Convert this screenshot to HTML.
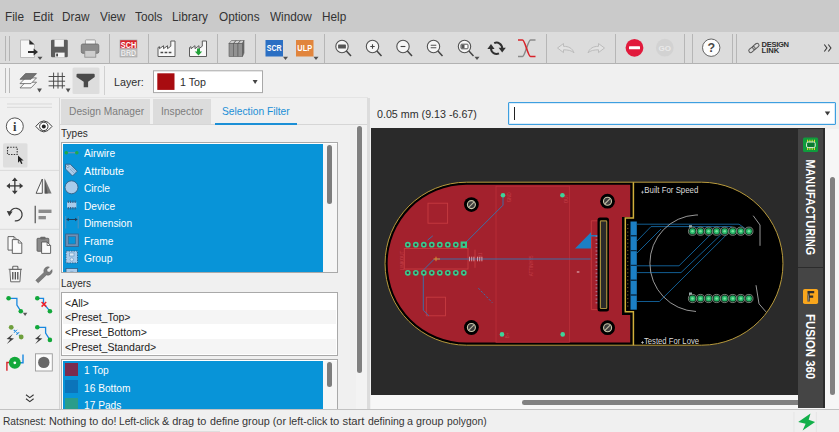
<!DOCTYPE html>
<html lang="en">
<head>
<meta charset="utf-8">
<title>EAGLE Board Editor</title>
<style>
*{box-sizing:border-box;margin:0;padding:0}
html,body{width:839px;height:432px;overflow:hidden;background:#f0f0f0}
body{position:relative;font-family:"Liberation Sans",sans-serif;color:#1a1a1a;font-size:11px}
.abs{position:absolute}
.t{position:absolute;white-space:nowrap;transform-origin:0 50%;line-height:1}
/* menu */
#menubar{left:0;top:0;width:839px;height:31.500px;background:#cacaca}
#menubar .t{font-size:13px;top:9.500px;color:#333;transform:scaleX(.905)}
/* toolbar 1 */
#tb1{left:0;top:31.500px;width:839px;height:32.500px;background:#dcdcdc;border-bottom:1px solid #b2b2b2}
.vsep{position:absolute;width:1px;background:#c3c3c3}
/* toolbar 2 */
#tb2{left:0;top:64px;width:839px;height:33px;background:#f0f0f0}
/* left palette */
#pal{left:0;top:97px;width:60px;height:312px;background:#f0f0f0;border-right:1px solid #d4d4d4}
.hsep{position:absolute;height:1px;background:#d0d0d0;left:0;width:59px}
/* panel */
#panel{left:60px;top:97px;width:311px;height:312px;background:#f0f0f0}
.tab{position:absolute;top:2px;height:24.500px;background:#dcdcdc}
.tab .t,.tabtxt{font-size:11px;color:#7c7c7c}
.list{position:absolute;background:#fff;border:1px solid #a9a9a9}
.sel{position:absolute;background:#0894d8}
.row{position:absolute;left:0;height:17.5px;width:100%}
.row .t{left:21px;top:4px;font-size:11.5px;color:#fff;transform:scaleX(.885)}
.lbl{font-size:11.5px;color:#2a2a2a;transform:scaleX(.87)}
/* canvas */
#cv{left:371px;top:128.300px;width:454px;height:266.700px;background:#2a2a2a;overflow:hidden}
/* status */
.st{top:6px;font-size:11.5px;color:#363636;white-space:pre}
#status{left:0;top:409px;width:839px;height:23px;background:#f0f0f0;border-top:1.400px solid #c2c2c2;overflow:hidden}
</style>
</head>
<body>

<!-- MENU BAR -->
<div id="menubar" class="abs">
  <span class="t" style="left:5px">File</span>
  <span class="t" style="left:32.5px">Edit</span>
  <span class="t" style="left:62px">Draw</span>
  <span class="t" style="left:100px">View</span>
  <span class="t" style="left:135px">Tools</span>
  <span class="t" style="left:172px">Library</span>
  <span class="t" style="left:219px">Options</span>
  <span class="t" style="left:269.5px">Window</span>
  <span class="t" style="left:322px">Help</span>
</div>

<!-- TOOLBAR 1 -->
<div id="tb1" class="abs">
  <svg class="abs" style="left:0;top:0" width="839" height="33" viewBox="0 31 839 33">
<path d="M5.5 35v25M9.5 35v25" stroke="#b4b4b4" stroke-width="1"/>
<path d="M109.5 33v29.5" stroke="#b6b6b6" stroke-width="1"/>
<path d="M148.5 33v29.5" stroke="#b6b6b6" stroke-width="1"/>
<path d="M217.5 33v29.5" stroke="#b6b6b6" stroke-width="1"/>
<path d="M255.5 33v29.5" stroke="#b6b6b6" stroke-width="1"/>
<path d="M324.5 33v29.5" stroke="#b6b6b6" stroke-width="1"/>
<path d="M546.5 33v29.5" stroke="#b6b6b6" stroke-width="1"/>
<path d="M615.5 33v29.5" stroke="#b6b6b6" stroke-width="1"/>
<path d="M684.5 33v29.5" stroke="#b6b6b6" stroke-width="1"/>
<path d="M692.5 33v29.5" stroke="#b6b6b6" stroke-width="1"/>
<path d="M732.5 33v29.5" stroke="#b6b6b6" stroke-width="1"/>
<path d="M736.5 33v29.5" stroke="#b6b6b6" stroke-width="1"/>
<path d="M20.500 39h9l5 4.600v12.900h-14z" fill="#f7f7f7" stroke="#b5b5b5" stroke-width=".900" stroke-linejoin="round"/><path d="M29.300 38.700l5.300 4.800h-5.300z" fill="#2c2c2c"/><path d="M28 51h6.500" stroke="#2c2c2c" stroke-width="2"/><path d="M33.600 47.600l4.400 3.400-4.400 3.400z" fill="#2c2c2c"/><path d="M37.5 55.700h5l-2.500 3.400z" fill="#505050"/><rect x="51" y="38.700" width="16.800" height="17.600" rx="1.300" fill="#5c5c5c"/><rect x="54.500" y="38.700" width="9.400" height="7" fill="#f2f2f2"/><rect x="55.200" y="51.600" width="9.400" height="4.700" fill="#f6f6f6"/><rect x="56.200" y="52.600" width="1.800" height="2.800" fill="#4a4a4a"/><rect x="85.400" y="38.900" width="10" height="5" rx=".800" fill="#f4f4f4" stroke="#9a9a9a" stroke-width=".900"/><rect x="81.300" y="43" width="17.500" height="9.300" rx="1.600" fill="#8b8b8b" stroke="#6a6a6a" stroke-width=".800"/><rect x="84.800" y="49.600" width="11" height="6.600" fill="#cdcdcd" stroke="#8a8a8a" stroke-width=".800"/><rect x="120" y="39" width="17" height="8.5" fill="#d9222a"/><rect x="120" y="47.500" width="17" height="8.500" fill="#bcbcbc"/><rect x="120" y="39" width="17" height="17" fill="none" stroke="#a5a5a5" stroke-width=".600"/><text x="128.500" y="46.600" font-family="Liberation Sans,sans-serif" font-weight="700" font-size="8.600" fill="#fff" text-anchor="middle" textLength="15.500" lengthAdjust="spacingAndGlyphs">SCH</text><text x="128.500" y="55" font-family="Liberation Sans,sans-serif" font-weight="700" font-size="8.600" fill="#fff" stroke="#a8a8a8" stroke-width=".250" text-anchor="middle" textLength="15.500" lengthAdjust="spacingAndGlyphs">BRD</text><path d="M158 55.5V46.500l1.500-.800v2l4-3v3l4-3v3l3.300-2.500V40h4.200V55.500z" fill="#f8f8f8" stroke="#5c5c5c" stroke-width="1" stroke-linejoin="round"/><path d="M160.500 51.500h2.700M164.600 51.500h2.700M168.700 51.500h2.700" stroke="#4a4a4a" stroke-width="1.300"/><path d="M189.5 55.5V46.500l1.500-.800v2l4-3v3l4-3v3l3.300-2.500V40h4.200V55.500z" fill="#f8f8f8" stroke="#5c5c5c" stroke-width="1" stroke-linejoin="round"/><path d="M197 47.5h3v3h2.2l-3.7 4-3.7-4h2.2z" fill="#21a038"/><g stroke="#5a5a5a" stroke-width=".600" fill="#929292"><path d="M229 42.5l2.5-3h4.5l-2.5 3z M233.5 42.5l2.5-3h4.5l-2.5 3zM238 42.500l2.500-3h3.500l-1.500 3z" fill="#cfcfcf"/><rect x="229" y="42.5" width="4.5" height="13"/><rect x="233.5" y="42.5" width="4.5" height="13"/><rect x="238" y="42.5" width="4.5" height="13"/><path d="M242.500 42.5l1.5-3v12.5l-1.5 3.500z" fill="#6a6a6a"/></g><rect x="265.500" y="39" width="17.5" height="16.5" fill="#2b6fc3"/><text x="274.2" y="50.400" font-family="Liberation Sans,sans-serif" font-weight="700" font-size="9" fill="#fff" text-anchor="middle" textLength="14.800" lengthAdjust="spacingAndGlyphs">SCR</text><path d="M283.0 55.700h5l-2.500 3.400z" fill="#505050"/><rect x="296" y="39" width="17.5" height="16.5" fill="#e1853d"/><text x="304.700" y="50.400" font-family="Liberation Sans,sans-serif" font-weight="700" font-size="9" fill="#fff" text-anchor="middle" textLength="14.800" lengthAdjust="spacingAndGlyphs">ULP</text><path d="M313.5 55.700h5l-2.500 3.400z" fill="#505050"/><g fill="none" stroke="#525252" stroke-width="1.100"><circle cx="342" cy="45.5" r="6.200" fill="#f6f6f6"/><path d="M346.4 50.1L351 55.1" stroke="#444" stroke-width="1.500"/><rect x="338.100" y="43.600" width="7.800" height="3.900" rx=".600" fill="#555" stroke="none"/></g><g fill="none" stroke="#525252" stroke-width="1.100"><circle cx="372.5" cy="45.5" r="6.200" fill="#f6f6f6"/><path d="M376.9 50.1L381.5 55.1" stroke="#444" stroke-width="1.500"/><path d="M370.300 45.500h4.400M372.500 43.300v4.400" stroke="#444" stroke-width="1.100"/></g><g fill="none" stroke="#525252" stroke-width="1.100"><circle cx="403" cy="45.5" r="6.200" fill="#f6f6f6"/><path d="M407.4 50.1L412 55.1" stroke="#444" stroke-width="1.500"/><path d="M400.600 45.500h4.800" stroke="#444" stroke-width="1.100"/></g><g fill="none" stroke="#525252" stroke-width="1.100"><circle cx="433.5" cy="45.5" r="6.200" fill="#f6f6f6"/><path d="M437.9 50.1L442.5 55.1" stroke="#444" stroke-width="1.500"/><path d="M430.700 44.200h5.600M430.700 46.800h5.600" stroke-width="1.1"/></g><g fill="none" stroke="#525252" stroke-width="1.100"><circle cx="464.5" cy="45.5" r="6.200" fill="#f6f6f6"/><path d="M468.9 50.1L473.5 55.1" stroke="#444" stroke-width="1.500"/><rect x="461" y="43.200" width="7" height="4.600" rx=".8" stroke-width="1" fill="#fff"/><rect x="461.500" y="43.700" width="3" height="3.600" fill="#555" stroke="none"/></g><path d="M474.5 55.700h5l-2.500 3.400z" fill="#505050"/><g fill="none" stroke="#303030" stroke-width="2"><path d="M494.2 42.2A5.6 5.6 0 0 1 502.2 47.3"/><path d="M499.0 52.4A5.6 5.6 0 0 1 491.0 47.3"/></g><path d="M498.6 46.7h7.200l-3.600 4.800z" fill="#303030"/><path d="M487.4 47.9h7.200l-3.600-4.800z" fill="#303030"/><path d="M518 55.500h4.500c2.500 0 5.500-16.500 8-16.500h5" fill="none" stroke="#8a8a8a" stroke-width="1.5"/><path d="M518 39h4.500c2.500 0 5.500 16.500 8 16.500h5" fill="none" stroke="#d8232a" stroke-width="1.600"/><path d="M557.500 47l6-4.500v2.800c5 0 9 2 10.500 6.500-2.500-2.300-6-3-10.500-3v2.800z" fill="#e2e2e2" stroke="#bcbcbc" stroke-width="1" stroke-linejoin="round"/><path d="M604.500 47l-6-4.500v2.800c-5 0-9 2-10.500 6.500 2.500-2.300 6-3 10.500-3v2.800z" fill="#e2e2e2" stroke="#bcbcbc" stroke-width="1" stroke-linejoin="round"/><circle cx="634.500" cy="46.800" r="8.900" fill="#e11a3c"/><rect x="629" y="45.300" width="11" height="3" rx=".5" fill="#fff"/><circle cx="664.800" cy="46.700" r="8.900" fill="#d2d2d2"/><text x="664.800" y="49.600" font-family="Liberation Sans,sans-serif" font-weight="700" font-size="8" fill="#e9e9e9" text-anchor="middle">GO</text><circle cx="711.200" cy="46.700" r="8.700" fill="#fdfdfd" stroke="#555" stroke-width=".900"/><text x="711.200" y="51" font-family="Liberation Sans,sans-serif" font-weight="700" font-size="12.500" fill="#484848" text-anchor="middle">?</text><g fill="none" stroke="#5a5a5a" stroke-width="1"><rect x="-3.600" y="-1.900" width="7.200" height="3.800" rx="1.900" transform="translate(752 48.600) rotate(-40)"/><rect x="-3.600" y="-1.900" width="7.200" height="3.800" rx="1.900" transform="translate(755.800 45.300) rotate(-40)"/></g><text x="761.500" y="45.900" font-family="Liberation Sans,sans-serif" font-weight="700" font-size="7.600" fill="#2e2e2e" textLength="27.500" lengthAdjust="spacing">DESIGN</text><text x="761.500" y="51.900" font-family="Liberation Sans,sans-serif" font-weight="700" font-size="7.600" fill="#2e2e2e" textLength="17.800" lengthAdjust="spacing">LINK</text><path d="M824.300 43.500l2.600 3.500-2.600 3.500M828.300 43.500l2.600 3.500-2.600 3.500" fill="none" stroke="#3a3a3a" stroke-width="1.100"/>
</svg>
</div>

<!-- TOOLBAR 2 -->
<div id="tb2" class="abs">
  <svg class="abs" style="left:0;top:0" width="839" height="33" viewBox="0 64 839 33">
<path d="M5.500 68v25M9.500 68v25" stroke="#b9b9b9" stroke-width="1"/><path d="M104.500 66v29" stroke="#d0d0d0" stroke-width="1"/><rect x="72.500" y="67.500" width="27" height="26.500" rx="1.500" fill="#dddddd"/><g stroke="#5e5e5e" stroke-width=".800" stroke-linejoin="round"><path d="M20 87.900l5.500-5.700h11l-5.500 5.700z" fill="#fbfbfb"/><path d="M20 83.600l5.500-5.700h11l-5.500 5.700z" fill="#fbfbfb"/><path d="M20 79.300l5.500-5.700h11l-5.500 5.700z" fill="#727272"/></g><path d="M37.100 88.600h4.800l-2.400 4z" fill="#505050"/><path d="M53.600 72.600v16M58 72.600v16M62.300 72.600v16M48.600 76.500h16.500M48.600 81.200h16.500M48.600 85.800h16.500" stroke="#444" stroke-width=".950" fill="none"/><path d="M65.700 88.600h4.800l-2.400 4z" fill="#505050"/><path d="M76.500 74.800a1 1 0 0 1 1-1h16.200a1 1 0 0 1 1 1v2.200l-6.600 4.800v5.400h-4.400v-5.400l-7.200-4.800z" fill="#4a4a4a"/><rect x="153.500" y="70.800" width="109" height="21.800" fill="#fff" stroke="#a8a8a8" stroke-width="1"/><rect x="157.300" y="73.300" width="17.200" height="16.600" fill="#a80c10"/><path d="M252.600 80h5l-2.500 4z" fill="#444"/></svg><span class="t" style="left:114px;top:12.500px;font-size:11.5px;color:#2e2e2e;transform:scaleX(.93)">Layer:</span><span class="t" style="left:180px;top:12.500px;font-size:11.5px;color:#2e2e2e;transform:scaleX(.93)">1 Top</span>
</div>

<!-- LEFT PALETTE -->
<div id="pal" class="abs">
  <svg class="abs" style="left:0;top:0" width="60" height="312" viewBox="0 97 60 312">
<path d="M7 104h45M7 107.300h45" stroke="#d9d9d9" stroke-width="1"/>
<path d="M0 170.4h59" stroke="#dadada" stroke-width="1"/>
<path d="M0 229.3h59" stroke="#dadada" stroke-width="1"/>
<path d="M0 289h59" stroke="#dadada" stroke-width="1"/>
<circle cx="14.800" cy="126.400" r="8.500" fill="#fdfdfd" stroke="#444" stroke-width=".900"/><text x="14.800" y="131" font-family="Liberation Serif,serif" font-weight="700" font-size="12.500" fill="#3a3a3a" text-anchor="middle">i</text>
<path d="M35.800 126.400Q43.800 115.400 52 126.400Q43.800 137.400 35.800 126.400Z" fill="#fff" stroke="#3a3a3a" stroke-width="1"/><circle cx="43.800" cy="126.400" r="4.200" fill="#fff" stroke="#3a3a3a" stroke-width="1"/><circle cx="43.800" cy="126.400" r="2" fill="#222"/>
<rect x="3" y="143.200" width="24.500" height="24.300" rx="1.500" fill="#dedede"/>
<rect x="7.500" y="147.300" width="9.700" height="7.200" fill="none" stroke="#3a3a3a" stroke-width="1.100" stroke-dasharray="1.500 1.200"/>
<path d="M18 155.500v7.200l1.800-1.700 1.400 3 1.300-.600-1.400-2.900h2.500z" fill="#222"/>
<g fill="#3a3a3a" stroke="none"><path d="M14.800 177.500l2.900 3.600h-5.800zM14.800 194.300l2.900-3.600h-5.800zM6.400 185.900l3.600-2.900v5.800zM23.200 185.900l-3.600-2.900v5.800z"/><rect x="14.200" y="180" width="1.300" height="12"/><rect x="8.800" y="185.250" width="12" height="1.300"/></g>
<path d="M42.300 179v14.300h-6.200z" fill="#fff" stroke="#444" stroke-width=".900" stroke-linejoin="round"/><path d="M44.700 178.600v14.900h6.900z" fill="#777"/><path d="M44.700 178.600v14.900h3z" fill="#555"/>
<path d="M9.600 213.500a6.300 6.300 0 1 1 5.200 7.300" fill="none" stroke="#3a3a3a" stroke-width="1.200"/><path d="M6.800 211l5.800.500-3.300 4.700z" fill="#3a3a3a"/>
<path d="M35.200 205.800v17.500" stroke="#444" stroke-width="1.100"/><rect x="38.500" y="209.600" width="13" height="3.400" fill="#8c8c8c"/><rect x="38.500" y="216" width="7.400" height="3.300" fill="#8c8c8c"/>
<path d="M8 236.6h6.0l3.500 3.500v10.0h-9.5z" fill="#fafafa" stroke="#555" stroke-width=".900" stroke-linejoin="round"/><path d="M14.0 236.6v3.500h3.500" fill="none" stroke="#555" stroke-width=".800"/><path d="M12.3 239.6h6.0l3.500 3.500v10.3h-9.5z" fill="#fafafa" stroke="#555" stroke-width=".900" stroke-linejoin="round"/><path d="M18.3 239.6v3.500h3.500" fill="none" stroke="#555" stroke-width=".800"/>
<rect x="37" y="238.300" width="11.800" height="13" rx=".800" fill="#8a8a8a" stroke="#555" stroke-width=".800"/><rect x="40.300" y="236.700" width="5.200" height="2.800" rx=".800" fill="#6a6a6a"/><path d="M41.6 242h5.5l3.500 3.500v7.9h-9z" fill="#fafafa" stroke="#555" stroke-width=".900" stroke-linejoin="round"/><path d="M47.1 242v3.500h3.500" fill="none" stroke="#555" stroke-width=".800"/>
<path d="M9.800 269.500h11l-.900 12.300h-9.200z" fill="#f6f6f6" stroke="#6a6a6a" stroke-width="1"/><path d="M8.600 269.200h13.400M12.700 269v-1.800q0-.900.900-.900h3.400q.900 0 .900.900v1.800" fill="none" stroke="#6a6a6a" stroke-width="1.100"/><path d="M12.800 272v7.500M15.300 272v7.500M17.800 272v7.500" stroke="#444" stroke-width="1.200"/>
<path d="M37 281.700l-1.200-1.500 8.200-7.800a4.300 4.300 0 0 1 5.400-5.400l-2.600 2.700.500 2.100 2.100.500 2.600-2.700a4.300 4.300 0 0 1-5.600 5.300l-8.100 7.900z" fill="#7c7c7c" stroke="#5c5c5c" stroke-width=".500"/>
<path d="M8.600 298.300H16.900V305L20.800 311.200" fill="none" stroke="#1888e0" stroke-width="1.300"/><circle cx="8.6" cy="298.3" r="2.3" fill="#12a83a"/><circle cx="20.8" cy="311.2" r="2.3" fill="#12a83a"/><path d="M22.900 312.800h4.400l-2.200 3.100z" fill="#555"/>
<path d="M37.300 298.300H43.500V303.500L49.900 311.200" fill="none" stroke="#1888e0" stroke-width="1.300"/><circle cx="37.3" cy="298.3" r="2.3" fill="#12a83a"/><circle cx="49.9" cy="311.2" r="2.3" fill="#12a83a"/><path d="M41.600 302l4.600 4.600M46.200 302l-4.600 4.600" stroke="#f0202a" stroke-width="1.500"/>
<path d="M11.200 327.300L21.200 337" stroke="#1888e0" stroke-width="1.200" stroke-dasharray="2.300 1.300"/><path d="M14 332.800l3-3M16.300 335l3-3" stroke="#1888e0" stroke-width="1"/><circle cx="11.2" cy="327.3" r="2.4" fill="#6f9f3c"/><circle cx="21.2" cy="337" r="2.4" fill="#6f9f3c"/><path d="M12.8 334l-6.200 5 3.600 .400-3.400 4.600 7.200-5.600-3.800-.400z" fill="#3f3f3f"/>
<path d="M37.300 327.300H45.600V333L49.900 339.900" fill="none" stroke="#1888e0" stroke-width="1.300"/><circle cx="37.3" cy="327.3" r="2.3" fill="#12a83a"/><circle cx="49.9" cy="339.9" r="2.3" fill="#12a83a"/><path d="M41.2 334l-6.200 5 3.600 .400-3.400 4.600 7.200-5.600-3.800-.400z" fill="#3f3f3f"/>
<path d="M6.900 370.700V362.500H10" fill="none" stroke="#d8232a" stroke-width="1.400"/><path d="M19 362.800H23V354.500" fill="none" stroke="#1888e0" stroke-width="1.400"/><circle cx="14.800" cy="362.800" r="6" fill="#12a83a"/><circle cx="14.800" cy="362.800" r="1.400" fill="#fff"/>
<rect x="35.500" y="353.800" width="16.800" height="17.200" fill="#fcfcfc" stroke="#9a9a9a" stroke-width=".900"/><circle cx="43.800" cy="362.400" r="5.700" fill="#686868"/>
<path d="M26 394.800l3.800 2.800 3.800-2.800M26 398.800l3.800 2.800 3.800-2.800" fill="none" stroke="#333" stroke-width="1.100"/>
</svg>
</div>

<!-- PANEL -->
<div id="panel" class="abs">
  
  <!-- tabs (coords relative to panel: x-60, y-97) -->
  <div class="tab" style="left:1px;width:89px"><span class="t" style="left:7.5px;top:7px;transform:scaleX(.93)">Design Manager</span></div>
  <div class="tab" style="left:93px;width:58px"><span class="t" style="left:7.5px;top:7px;transform:scaleX(.93)">Inspector</span></div>
  <span class="t tabtxt" style="left:162px;top:9px;color:#1b8fd6;transform:scaleX(.93)">Selection Filter</span>
  
  <div class="abs" style="left:0;top:26.800px;width:307px;height:1px;background:#d6d6d6"></div>
  <div class="abs" style="left:155px;top:25.800px;width:82px;height:2.700px;background:#1b8fd6"></div>

  <span class="t lbl" style="left:1px;top:31px">Types</span>
  <!-- types list -->
  <div class="list" style="left:1px;top:45px;width:277px;height:131px;overflow:hidden">
    <div class="sel" style="left:1px;top:1px;width:260px;height:129px">
      <div class="row" style="top:0.0px"><svg class="abs" style="left:0;top:0" width="18" height="17.500" viewBox="0 0 18 17.500"><path d="M3.300 8.700h10.500" stroke="#6f93b3" stroke-width="1.200"/><circle cx="3.300" cy="8.700" r="1.800" fill="#1fa84a"/><circle cx="13.800" cy="8.700" r="1.800" fill="#1fa84a"/></svg><span class="t">Airwire</span></div>
      <div class="row" style="top:17.5px"><svg class="abs" style="left:0;top:0" width="18" height="17.500" viewBox="0 0 18 17.500"><path d="M2.500 2.200h4.800l7 7-4.800 4.800-7-7z" fill="#a9cbea" stroke="#2f5f86" stroke-width=".900" stroke-linejoin="round"/><circle cx="4.800" cy="4.500" r="1" fill="#fff" stroke="#2f5f86" stroke-width=".500"/><path d="M7 7l4 4M8.500 5.800l3.800 3.800" stroke="#6f93b3" stroke-width=".600"/></svg><span class="t" style="transform:scaleX(.935)">Attribute</span></div>
      <div class="row" style="top:35.0px"><svg class="abs" style="left:0;top:0" width="18" height="17.500" viewBox="0 0 18 17.500"><circle cx="8.500" cy="8.300" r="6.500" fill="#a9cbea" stroke="#2f5f86" stroke-width=".900"/></svg><span class="t">Circle</span></div>
      <div class="row" style="top:52.5px"><svg class="abs" style="left:0;top:0" width="18" height="17.500" viewBox="0 0 18 17.500"><rect x="4" y="5.200" width="9.400" height="5.600" fill="#a9cbea"/><path d="M5.300 3.600v2.400M7.600 3.600v2.400M9.900 3.600v2.400M12.200 3.600v2.400M5.300 10v2.400M7.600 10v2.400M9.900 10v2.400M12.200 10v2.400" stroke="#3a5f86" stroke-width="1.100"/></svg><span class="t">Device</span></div>
      <div class="row" style="top:70.0px"><svg class="abs" style="left:0;top:0" width="18" height="17.500" viewBox="0 0 18 17.500"><path d="M2.700 2v12.500M15.200 2v12.500" stroke="#5f8fb8" stroke-width=".900"/><path d="M4 5.500h10" stroke="#1d3e5c" stroke-width="1"/><path d="M3.200 5.500l2.600-1.700v3.400zM14.700 5.500l-2.600-1.700v3.400z" fill="#1d3e5c"/></svg><span class="t">Dimension</span></div>
      <div class="row" style="top:87.5px"><svg class="abs" style="left:0;top:0" width="18" height="17.500" viewBox="0 0 18 17.500"><rect x="2.700" y="2" width="12.600" height="12.600" fill="#6d90b6" stroke="#3d5f82" stroke-width=".800"/><rect x="5.300" y="4.600" width="7.400" height="7.400" fill="#0894d8" stroke="#3d5f82" stroke-width=".500"/></svg><span class="t">Frame</span></div>
      <div class="row" style="top:105.0px"><svg class="abs" style="left:0;top:0" width="18" height="17.500" viewBox="0 0 18 17.500"><rect x="3" y="2" width="11.500" height="12" fill="#a9cbea" stroke="#2f5f86" stroke-width=".900" stroke-dasharray="1.500 1"/><rect x="6.500" y="4" width="4.500" height="3" fill="#dcebf8" stroke="#5f8fb8" stroke-width=".600"/><circle cx="8.800" cy="10.500" r="1.700" fill="#dcebf8" stroke="#5f8fb8" stroke-width=".600"/></svg><span class="t">Group</span></div>
      <div class="row" style="top:122.5px"><svg class="abs" style="left:0;top:0" width="18" height="17.500" viewBox="0 0 18 17.500"><rect x="3" y="1.500" width="11.500" height="12" fill="#a9cbea" stroke="#2f5f86" stroke-width=".800"/><circle cx="8.800" cy="7" r="2.500" fill="#dcebf8" stroke="#5f8fb8" stroke-width=".600"/></svg><span class="t">Hole</span></div>
      
    </div>
    <div class="abs" style="left:261px;top:1px;width:14px;height:129px;background:#f6f6f6"></div>
    <div class="abs" style="left:265px;top:2px;width:5px;height:59px;background:#7d7d7d;border-radius:2.5px"></div>
  </div>

  <span class="t lbl" style="left:1px;top:181px">Layers</span>
  <!-- presets list -->
  <div class="list" style="left:1px;top:195px;width:277px;height:64px;overflow:hidden">
    <div class="abs" style="left:1px;top:16.5px;width:273px;height:14.7px;background:#f5f5f5"></div>
    <div class="abs" style="left:1px;top:46px;width:273px;height:14.7px;background:#f5f5f5"></div>
    <span class="t" style="left:3px;top:4.5px;font-size:11.5px;color:#222;transform:scaleX(.915)">&lt;All&gt;</span>
    <span class="t" style="left:3px;top:19.2px;font-size:11.5px;color:#222;transform:scaleX(.915)">&lt;Preset_Top&gt;</span>
    <span class="t" style="left:3px;top:33.9px;font-size:11.5px;color:#222;transform:scaleX(.915)">&lt;Preset_Bottom&gt;</span>
    <span class="t" style="left:3px;top:48.6px;font-size:11.5px;color:#222;transform:scaleX(.915)">&lt;Preset_Standard&gt;</span>
  </div>
  <!-- layer colour list -->
  <div class="list" style="left:1px;top:262px;width:277px;height:60px;overflow:hidden;border-bottom:none">
    <div class="sel" style="left:1px;top:1px;width:260px;height:60px">
      <div class="row" style="top:0"><div class="abs" style="left:2px;top:1.5px;width:13px;height:13px;background:#7a2c4e"></div><span class="t">1 Top</span></div>
      <div class="row" style="top:17.5px"><div class="abs" style="left:2px;top:1.5px;width:13px;height:13px;background:#0b74ba"></div><span class="t">16 Bottom</span></div>
      <div class="row" style="top:35px"><div class="abs" style="left:2px;top:1.5px;width:13px;height:13px;background:#2a9d8a"></div><span class="t">17 Pads</span></div>
    </div>
    <div class="abs" style="left:261px;top:1px;width:14px;height:60px;background:#f6f6f6"></div>
    <div class="abs" style="left:265px;top:2px;width:5px;height:25px;background:#7d7d7d;border-radius:2.5px"></div>
  </div>

  <!-- outer scrollbar -->
  <div class="abs" style="left:296px;top:28px;width:11px;height:284px;background:#f3f3f3"></div>
  <div class="abs" style="left:296.5px;top:28.5px;width:5px;height:247px;background:#808080;border-radius:2.5px"></div>
  

</div>

<div class="abs" style="left:0;top:97px;width:839px;height:1px;background:#e4e4e4"></div>
<!-- CANVAS TOP BAR -->
<div id="cvtop" class="abs" style="left:368px;top:97px;width:471px;height:32px;background:#f0f0f0">
  <span class="t" style="left:9px;top:11.500px;font-size:11.5px;color:#2e2e2e;transform:scaleX(.93)">0.05 mm (9.13 -6.67)</span>
  <div class="abs" style="left:139.800px;top:4.700px;width:328px;height:23px;background:#fff;border:1.200px solid #3d9fe0;border-radius:1px;box-shadow:inset 0 0 0 .800px #cfe6f7"></div>
  <div class="abs" style="left:145.800px;top:9.800px;width:1.100px;height:13px;background:#222"></div>
  <svg class="abs" style="left:456px;top:14px" width="7" height="5" viewBox="0 0 7 5"><path d="M.8.500h5.400L3.500 4.500z" fill="#3a3a3a"/></svg>
  
</div>

<div class="abs" style="left:367.300px;top:98px;width:2.600px;height:311px;background:#dcdcdc"></div>
<!-- CANVAS -->
<div id="cv" class="abs">
  <svg class="abs" style="left:0;top:0" width="455" height="267" viewBox="371 127.800 455 267">
<path d="M466.500 182H701.500A81.500 81.500 0 0 1 701.500 345H466.500A81.500 81.500 0 0 1 466.500 182Z" fill="#000" stroke="#b89a3c" stroke-width="1"/>
<path d="M466.500 184.600H630.200V216.700H622V314.800H630.200V342.400H466.500A78.900 78.900 0 0 1 466.500 184.600Z" fill="#a3212d"/>
<path d="M633.400 182V217.800H625.300V311.500H633.400V345" fill="none" stroke="#cfae3b" stroke-width="1.500"/>
<g fill="none" stroke="#c63b41" stroke-width=".900">
<rect x="496" y="186" width="73.600" height="156" stroke="#bb3039" stroke-width=".800"/>
<rect x="428" y="203" width="19.600" height="20"/>
<rect x="426.300" y="297" width="19.200" height="18.600"/>
<rect x="404.300" y="248.300" width="63.700" height="20.500"/>
<path d="M475 249.500V267.600M591.300 220.600V309.400H598M591.300 220.600H598"/>
</g>
<g font-family="Liberation Sans,sans-serif" font-size="4.500" fill="#c43f47">
<text transform="translate(403.800 270) rotate(-90)">LINKOUT</text>
<text transform="translate(511 202) rotate(-90)">GND</text>
<text transform="translate(567.500 203) rotate(-90)">OUT</text>
<text transform="translate(533 276) rotate(-90)">ATTINY85</text>
<text transform="translate(508.500 338) rotate(-90)">B+</text>
<text transform="translate(482 258) rotate(-90)">R1</text>
</g>
<g fill="none" stroke="#3f6ea6" stroke-width="1">
<path d="M503 195V205L461 247"/>
<path d="M434.400 258.800H590.600"/>
<path d="M434.400 258.800L423.300 270V310L429 315.600"/>
<path d="M427.500 240L432.800 235.600"/>
<path d="M478.400 288L492.300 302.500" stroke-dasharray="2.200 1.600"/>
</g>
<path d="M433.500 258.800H440M436 256.500V261" stroke="#e08a2a" stroke-width="1" fill="none"/>
<path d="M469.500 256.500v4.600M471.700 256.500v4.600M473.900 256.500v4.600M477.500 256.500v4.600M479.700 256.500v4.600M481.900 256.500v4.600" stroke="#e6b9c0" stroke-width=".800"/>
<path d="M576.800 271.800h2.600" stroke="#e8c6cc" stroke-width="1"/>
<path d="M575 248.400L591 232V248.400Z" fill="#1c7fc4"/><path d="M590 235.600H598" stroke="#1c7fc4" stroke-width="1.500"/>
<path d="M595.600 236.0h2.200M595.600 239.7h2.200M595.600 243.4h2.200M595.600 247.1h2.200M595.600 250.8h2.200M595.600 254.5h2.200M595.600 258.2h2.200M595.600 261.9h2.200M595.600 265.6h2.200M595.600 269.3h2.200M595.600 273.0h2.200M595.600 276.7h2.200M595.600 280.4h2.200M595.600 284.1h2.200M595.600 287.8h2.200M595.600 291.5h2.200M595.600 295.2h2.200M595.600 298.9h2.200M595.600 302.6h2.200" stroke="#b98aa8" stroke-width=".900"/>
<rect x="597.500" y="217.400" width="11.500" height="94" rx="2.500" fill="#000"/>
<rect x="600.400" y="220.700" width="6.300" height="87.600" rx=".800" fill="#2a2a2a" stroke="#a48c3c" stroke-width="1.200"/>
<circle cx="471.4" cy="204.4" r="7.400" fill="#000"/><circle cx="471.4" cy="204.4" r="4" fill="#3c3c3c" stroke="#cdc8aa" stroke-width="1.100"/><path d="M468.6 207.2L474.2 201.6" stroke="#bcb8a0" stroke-width="1.100"/>
<circle cx="471.4" cy="327.3" r="7.400" fill="#000"/><circle cx="471.4" cy="327.3" r="4" fill="#3c3c3c" stroke="#cdc8aa" stroke-width="1.100"/><path d="M468.6 330.1L474.2 324.5" stroke="#bcb8a0" stroke-width="1.100"/>
<circle cx="607.5" cy="201" r="7.400" fill="#000"/><circle cx="607.5" cy="201" r="4" fill="#3c3c3c" stroke="#cdc8aa" stroke-width="1.100"/><path d="M604.7 203.8L610.3 198.2" stroke="#bcb8a0" stroke-width="1.100"/>
<circle cx="607.6" cy="327.5" r="7.400" fill="#000"/><circle cx="607.6" cy="327.5" r="4" fill="#3c3c3c" stroke="#cdc8aa" stroke-width="1.100"/><path d="M604.8 330.3L610.4 324.7" stroke="#bcb8a0" stroke-width="1.100"/>
<circle cx="503" cy="195" r="2.300" fill="#3fd39a"/>
<circle cx="562.4" cy="195" r="2.300" fill="#3fd39a"/>
<circle cx="502" cy="334.2" r="2.300" fill="#3fd39a"/>
<circle cx="562.7" cy="334.2" r="2.300" fill="#3fd39a"/>
<circle cx="407.8" cy="244.5" r="2.850" fill="#38cc8e"/>
<circle cx="407.8" cy="244.5" r="1.200" fill="#6a1f2c"/>
<circle cx="415.8" cy="244.5" r="2.850" fill="#38cc8e"/>
<circle cx="415.8" cy="244.5" r="1.200" fill="#6a1f2c"/>
<circle cx="423.8" cy="244.5" r="2.850" fill="#38cc8e"/>
<circle cx="423.8" cy="244.5" r="1.200" fill="#6a1f2c"/>
<circle cx="431.8" cy="244.5" r="2.850" fill="#38cc8e"/>
<circle cx="431.8" cy="244.5" r="1.200" fill="#6a1f2c"/>
<circle cx="439.8" cy="244.5" r="2.850" fill="#38cc8e"/>
<circle cx="439.8" cy="244.5" r="1.200" fill="#6a1f2c"/>
<circle cx="447.8" cy="244.5" r="2.850" fill="#38cc8e"/>
<circle cx="447.8" cy="244.5" r="1.200" fill="#6a1f2c"/>
<circle cx="455.8" cy="244.5" r="2.850" fill="#38cc8e"/>
<circle cx="455.8" cy="244.5" r="1.200" fill="#6a1f2c"/>
<rect x="460.6" y="241.3" width="6.400" height="6.400" fill="#35c98a"/>
<circle cx="463.8" cy="244.5" r="1.200" fill="#6a1f2c"/>
<circle cx="407.8" cy="272.6" r="2.850" fill="#38cc8e"/>
<circle cx="407.8" cy="272.6" r="1.200" fill="#6a1f2c"/>
<circle cx="415.8" cy="272.6" r="2.850" fill="#38cc8e"/>
<circle cx="415.8" cy="272.6" r="1.200" fill="#6a1f2c"/>
<circle cx="423.8" cy="272.6" r="2.850" fill="#38cc8e"/>
<circle cx="423.8" cy="272.6" r="1.200" fill="#6a1f2c"/>
<circle cx="431.8" cy="272.6" r="2.850" fill="#38cc8e"/>
<circle cx="431.8" cy="272.6" r="1.200" fill="#6a1f2c"/>
<circle cx="439.8" cy="272.6" r="2.850" fill="#38cc8e"/>
<circle cx="439.8" cy="272.6" r="1.200" fill="#6a1f2c"/>
<circle cx="447.8" cy="272.6" r="2.850" fill="#38cc8e"/>
<circle cx="447.8" cy="272.6" r="1.200" fill="#6a1f2c"/>
<circle cx="455.8" cy="272.6" r="2.850" fill="#38cc8e"/>
<circle cx="455.8" cy="272.6" r="1.200" fill="#6a1f2c"/>
<circle cx="463.8" cy="272.6" r="2.850" fill="#38cc8e"/>
<circle cx="463.8" cy="272.6" r="1.200" fill="#6a1f2c"/>
<rect x="630.500" y="221.300" width="6.300" height="88.200" fill="#1c7fc4"/>
<path d="M630.500 235.6h6.300M630.500 250.4h6.300M630.500 265.2h6.300M630.500 280.0h6.300M630.500 294.8h6.300" stroke="#0b2c47" stroke-width="1.400"/>
<path d="M627.800 224v84" stroke="#b9973b" stroke-width=".800" stroke-dasharray="1 2.700"/>
<g fill="none" stroke="#125d92" stroke-width="1">
<path d="M636.800 224H739L748.800 231"/>
<path d="M636.800 241L651 226.400H731L740.700 231"/>
<path d="M636.800 253L661 228.800"/>
<path d="M636.800 265.600H679L712 233L716.300 231"/>
<path d="M636.800 272.400H681L722 233.500"/>
<path d="M636.800 301.300H659.400L727 234"/>

</g>
<g fill="none" stroke="#a8a8a8" stroke-width=".900">
<path d="M698 214.800H696A48.300 48.300 0 0 0 696 311.300"/>
<path d="M753.200 215.500L760 224.800V245.600"/>
<path d="M756 285L759 303.600L766 311.700"/>
</g>
<rect x="689" y="225" width="3" height="2.500" fill="#9aa"/>
<circle cx="692.5" cy="231" r="4.100" fill="#0c1a12" stroke="#8b978d" stroke-width=".800"/><circle cx="692.5" cy="231" r="3" fill="#25b165"/><circle cx="692.5" cy="231" r="1.300" fill="#74e49c"/>
<circle cx="700.5" cy="231" r="4.100" fill="#0c1a12" stroke="#8b978d" stroke-width=".800"/><circle cx="700.5" cy="231" r="3" fill="#25b165"/><circle cx="700.5" cy="231" r="1.300" fill="#74e49c"/>
<circle cx="708.6" cy="231" r="4.100" fill="#0c1a12" stroke="#8b978d" stroke-width=".800"/><circle cx="708.6" cy="231" r="3" fill="#25b165"/><circle cx="708.6" cy="231" r="1.300" fill="#74e49c"/>
<circle cx="716.6" cy="231" r="4.100" fill="#0c1a12" stroke="#8b978d" stroke-width=".800"/><circle cx="716.6" cy="231" r="3" fill="#25b165"/><circle cx="716.6" cy="231" r="1.300" fill="#74e49c"/>
<circle cx="724.7" cy="231" r="4.100" fill="#0c1a12" stroke="#8b978d" stroke-width=".800"/><circle cx="724.7" cy="231" r="3" fill="#25b165"/><circle cx="724.7" cy="231" r="1.300" fill="#74e49c"/>
<circle cx="732.8" cy="231" r="4.100" fill="#0c1a12" stroke="#8b978d" stroke-width=".800"/><circle cx="732.8" cy="231" r="3" fill="#25b165"/><circle cx="732.8" cy="231" r="1.300" fill="#74e49c"/>
<circle cx="740.8" cy="231" r="4.100" fill="#0c1a12" stroke="#8b978d" stroke-width=".800"/><circle cx="740.8" cy="231" r="3" fill="#25b165"/><circle cx="740.8" cy="231" r="1.300" fill="#74e49c"/>
<circle cx="748.9" cy="231" r="4.100" fill="#0c1a12" stroke="#8b978d" stroke-width=".800"/><circle cx="748.9" cy="231" r="3" fill="#25b165"/><circle cx="748.9" cy="231" r="1.300" fill="#74e49c"/>
<rect x="689" y="292.3" width="3" height="2.500" fill="#9aa"/>
<circle cx="692.5" cy="298.3" r="4.100" fill="#0c1a12" stroke="#8b978d" stroke-width=".800"/><circle cx="692.5" cy="298.3" r="3" fill="#25b165"/><circle cx="692.5" cy="298.3" r="1.300" fill="#74e49c"/>
<circle cx="700.5" cy="298.3" r="4.100" fill="#0c1a12" stroke="#8b978d" stroke-width=".800"/><circle cx="700.5" cy="298.3" r="3" fill="#25b165"/><circle cx="700.5" cy="298.3" r="1.300" fill="#74e49c"/>
<circle cx="708.6" cy="298.3" r="4.100" fill="#0c1a12" stroke="#8b978d" stroke-width=".800"/><circle cx="708.6" cy="298.3" r="3" fill="#25b165"/><circle cx="708.6" cy="298.3" r="1.300" fill="#74e49c"/>
<circle cx="716.6" cy="298.3" r="4.100" fill="#0c1a12" stroke="#8b978d" stroke-width=".800"/><circle cx="716.6" cy="298.3" r="3" fill="#25b165"/><circle cx="716.6" cy="298.3" r="1.300" fill="#74e49c"/>
<circle cx="724.7" cy="298.3" r="4.100" fill="#0c1a12" stroke="#8b978d" stroke-width=".800"/><circle cx="724.7" cy="298.3" r="3" fill="#25b165"/><circle cx="724.7" cy="298.3" r="1.300" fill="#74e49c"/>
<circle cx="732.8" cy="298.3" r="4.100" fill="#0c1a12" stroke="#8b978d" stroke-width=".800"/><circle cx="732.8" cy="298.3" r="3" fill="#25b165"/><circle cx="732.8" cy="298.3" r="1.300" fill="#74e49c"/>
<circle cx="740.8" cy="298.3" r="4.100" fill="#0c1a12" stroke="#8b978d" stroke-width=".800"/><circle cx="740.8" cy="298.3" r="3" fill="#25b165"/><circle cx="740.8" cy="298.3" r="1.300" fill="#74e49c"/>
<circle cx="748.9" cy="298.3" r="4.100" fill="#0c1a12" stroke="#8b978d" stroke-width=".800"/><circle cx="748.9" cy="298.3" r="3" fill="#25b165"/><circle cx="748.9" cy="298.3" r="1.300" fill="#74e49c"/>
<path d="M641 192h3M642.500 190.500v3M641 342.300h3M642.500 340.800v3" stroke="#ddd" stroke-width=".600"/>
<text x="644.300" y="193.300" font-family="Liberation Sans,sans-serif" font-size="8.600" fill="#dcdcdc" textLength="54" lengthAdjust="spacingAndGlyphs">Built For Speed</text>
<text x="644" y="343.700" font-family="Liberation Sans,sans-serif" font-size="8.600" fill="#dcdcdc" textLength="55" lengthAdjust="spacingAndGlyphs">Tested For Love</text>
</svg>
</div>

<!-- below-canvas h-scrollbar -->
<div class="abs" style="left:371px;top:395px;width:468px;height:14px;background:#f7f7f7"></div>
<div class="abs" style="left:522px;top:400.200px;width:290px;height:4.600px;background:#818181;border-radius:2.300px"></div>
<!-- v-scrollbar -->
<div class="abs" style="left:825px;top:129px;width:14px;height:280px;background:#f6f6f6"></div>
<div class="abs" style="left:829.500px;top:177.200px;width:5.200px;height:217.500px;background:#818181;border-radius:2.600px"></div>
<!-- side tabs -->
<div class="abs" style="left:798px;top:129px;width:27px;height:279.400px;background:#2c2c2c"></div>
<div class="abs" style="left:798px;top:129px;width:24.800px;height:138px;background:#454545"></div>
<div class="abs" style="left:798px;top:268.400px;width:24.800px;height:140px;background:#454545"></div>
<svg class="abs" style="left:798px;top:129px" width="27" height="280" viewBox="798 129 27 280">
  <rect x="803" y="137.400" width="15.100" height="14.600" rx="1.500" fill="#0f9c3c"/>
  <path d="M807.600 139.700v2.600M809.900 139.700v2.600M812.200 139.700v2.600M814.500 139.700v2.600M807.600 147.400v2.600M809.900 147.400v2.600M812.200 147.400v2.600M814.500 147.400v2.600" stroke="#f7e41c" stroke-width=".900"/>
  <rect x="806.600" y="142" width="8.600" height="5.600" rx="1.500" fill="#0a7a2e" stroke="#e8efe0" stroke-width="1"/>
  <rect x="803" y="289" width="15.100" height="15" rx="1.800" fill="#f9a61c"/>
  <path d="M808.600 301.500v-9.300h5.600M808.600 296.600h4.600" fill="none" stroke="#2e2e2e" stroke-width="2.200"/>
  <path d="M807.800 293.500q1.500 3 .300 8" fill="none" stroke="#9a9a9a" stroke-width=".800"/>
  <text transform="translate(806.400 159.500) rotate(90)" font-family="Liberation Sans,sans-serif" font-weight="700" font-size="12" fill="#fff" textLength="95.800" lengthAdjust="spacingAndGlyphs">MANUFACTURING</text>
  <text transform="translate(806.400 314) rotate(90)" font-family="Liberation Sans,sans-serif" font-weight="700" font-size="12" fill="#fff" textLength="65.200" lengthAdjust="spacingAndGlyphs">FUSION 360</text>
</svg>

<!-- STATUS BAR -->
<div id="status" class="abs">
  <span class="t st" style="left:2.6px;transform:scaleX(0.888)">Ratsnest: </span><span class="t st" style="left:48.6px;transform:scaleX(0.942)">Nothing to do! </span><span class="t st" style="left:119.1px;transform:scaleX(0.889)">Left-click </span><span class="t st" style="left:162.3px;transform:scaleX(0.948)">&amp; drag to </span><span class="t st" style="left:209.6px;transform:scaleX(0.930)">define </span><span class="t st" style="left:241.7px;transform:scaleX(0.943)">group (or </span><span class="t st" style="left:288.7px;transform:scaleX(0.925)">left-click </span><span class="t st" style="left:330.1px;transform:scaleX(0.978)">to start </span><span class="t st" style="left:367.6px;transform:scaleX(0.908)">defining </span><span class="t st" style="left:407.1px;transform:scaleX(0.936)">a group </span><span class="t st" style="left:446.6px;transform:scaleX(0.897)">polygon)</span>
  <svg class="abs" style="left:790px;top:0" width="49" height="23" viewBox="790 409 49 23"><path d="M810.500 412.600L798.200 421L805.600 422.700L802.600 429.400L815.100 421L808.700 418.700Z" fill="#12b04a"/><path d="M794 411v21M816.300 411v21" stroke="#e5e5e5" stroke-width="1"/></svg>
  <div class="abs" style="left:30px;top:20.500px;width:190px;height:2.500px;background:#dedede"></div>
</div>

</body>
</html>
